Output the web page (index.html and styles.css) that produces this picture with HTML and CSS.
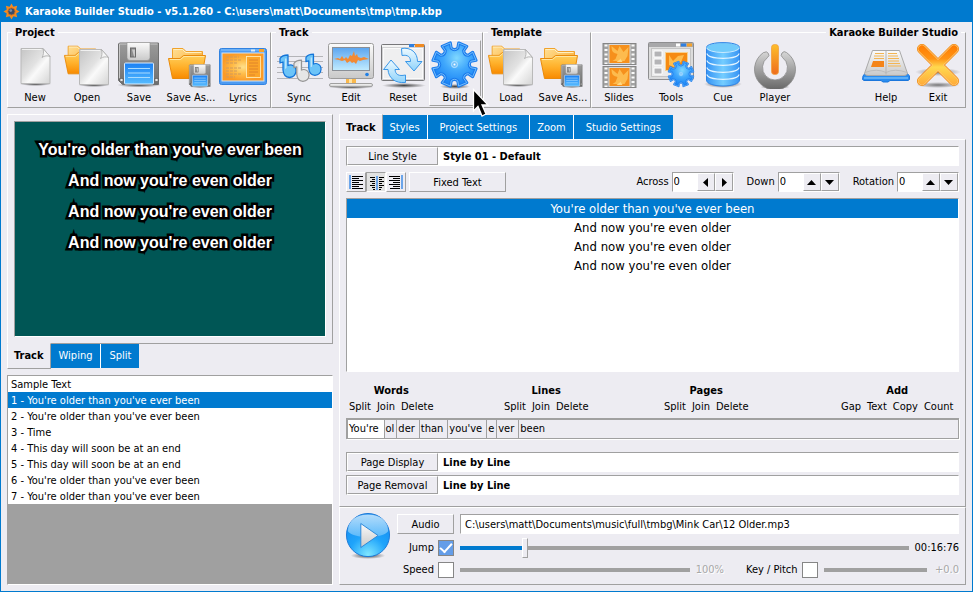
FILE: index.html
```html
<!DOCTYPE html>
<html lang="en">
<head>
<meta charset="utf-8">
<title>Karaoke Builder Studio</title>
<link rel="stylesheet" href="styles.css">
</head>
<body>
<svg class="defs" aria-hidden="true">
  <defs>
    <linearGradient id="paper" x1="0" y1="0" x2="1" y2="1"><stop offset="0" stop-color="#c4c4c4"/><stop offset=".45" stop-color="#e2e2e2"/><stop offset=".6" stop-color="#fafafa"/><stop offset="1" stop-color="#d4d4d4"/></linearGradient>
    <linearGradient id="folder" x1="0" y1="0" x2="0" y2="1"><stop offset="0" stop-color="#ffcf5c"/><stop offset=".5" stop-color="#ffb02a"/><stop offset="1" stop-color="#f88a00"/></linearGradient>
    <linearGradient id="folderback" x1="0" y1="0" x2="1" y2="1"><stop offset="0" stop-color="#ffdf94"/><stop offset="1" stop-color="#f9a01c"/></linearGradient>
    <linearGradient id="steel" x1="0" y1="0" x2="0" y2="1"><stop offset="0" stop-color="#9b9b9b"/><stop offset="1" stop-color="#6e6e6e"/></linearGradient>
    <linearGradient id="silver" x1="0" y1="0" x2="0" y2="1"><stop offset="0" stop-color="#fbfbfb"/><stop offset="1" stop-color="#c9c9c9"/></linearGradient>
    <linearGradient id="blue" x1="0" y1="0" x2="0" y2="1"><stop offset="0" stop-color="#1a80f4"/><stop offset="1" stop-color="#57bcff"/></linearGradient>
    <linearGradient id="sky" x1="0" y1="0" x2="0" y2="1"><stop offset="0" stop-color="#5ba5f0"/><stop offset="1" stop-color="#c2ecff"/></linearGradient>
    <linearGradient id="ice" x1="0" y1="0" x2="0" y2="1"><stop offset="0" stop-color="#eefaff"/><stop offset="1" stop-color="#8fd3fb"/></linearGradient>
    <radialGradient id="amber"><stop offset="0" stop-color="#ffe08a"/><stop offset=".5" stop-color="#ffbc48"/><stop offset="1" stop-color="#fb9a26"/></radialGradient>
    <radialGradient id="gearfill" cx=".55" cy=".35" r=".6"><stop offset="0" stop-color="#80d8ff"/><stop offset=".5" stop-color="#41a8fc"/><stop offset="1" stop-color="#1c86f6"/></radialGradient>
    <linearGradient id="cyl" x1="0" y1="0" x2="1" y2="0"><stop offset="0" stop-color="#3794f5"/><stop offset=".5" stop-color="#74cdff"/><stop offset="1" stop-color="#3794f5"/></linearGradient>
    <linearGradient id="ring" x1="0" y1="0" x2="0" y2="1"><stop offset="0" stop-color="#d6d6d6"/><stop offset="1" stop-color="#666"/></linearGradient>
    <linearGradient id="bar" x1="0" y1="0" x2="0" y2="1"><stop offset="0" stop-color="#fdbf2c"/><stop offset="1" stop-color="#ee6c1c"/></linearGradient>
    <linearGradient id="cross" gradientUnits="userSpaceOnUse" x1="24" y1="3" x2="24" y2="45"><stop offset="0" stop-color="#ff7a00"/><stop offset=".35" stop-color="#ff9416"/><stop offset=".55" stop-color="#ffd84e"/><stop offset="1" stop-color="#ffa838"/></linearGradient>
    <radialGradient id="ball" cx=".5" cy=".95" r=".95"><stop offset="0" stop-color="#7fe6ff"/><stop offset=".45" stop-color="#1fa4fb"/><stop offset="1" stop-color="#1487ee"/></radialGradient>
    <linearGradient id="gloss" x1="0" y1="0" x2="0" y2="1"><stop offset="0" stop-color="#e9f8ff"/><stop offset="1" stop-color="#6fc2fb"/></linearGradient>
    <radialGradient id="shade"><stop offset="0" stop-color="#444"/><stop offset="1" stop-color="#444" stop-opacity="0"/></radialGradient>
  </defs>
  <symbol id="i-page" viewBox="0 0 32 39">
    <ellipse cx="16" cy="37" rx="16" ry="2" fill="url(#shade)"/>
    <path d="M1.500 1.500H23.500L30.500 9.500V36.500H1.500z" fill="url(#paper)" stroke="#b9b9b9"/>
    <path d="M2.500 2.500H22" stroke="#fff" fill="none" opacity=".7"/>
    <path d="M23.500 1.500C24.500 5 24 8 22.500 10.500C25 8.500 28 8.500 30.500 9.500z" fill="#f6f6f6" stroke="#a8a8a8" stroke-width=".8"/>
  </symbol>
  <symbol id="i-folder" viewBox="0 0 38 33">
    <path d="M4.500 28V1.500H15L18 4.500H34.500V28z" fill="url(#folderback)" stroke="#f0a22c"/>
    <path d="M5.500 2.500H14.500L17.500 5.500H33.500" fill="none" stroke="#ffefbf"/>
    <path d="M.500 11.500H12L15.500 8.500H37.500L33.500 31.500H4.500z" fill="url(#folder)" stroke="#e98a0c"/>
    <path d="M1.800 12.500H12.500L16 9.500H36.400" fill="none" stroke="#ffe6a0"/>
  </symbol>
  <symbol id="i-floppy" viewBox="0 0 44 46">
    <ellipse cx="22" cy="43.500" rx="22" ry="2.500" fill="url(#shade)"/>
    <path d="M2.500 1.500H41.500V43H5.500L1.500 39V2.500z" fill="url(#steel)" stroke="#707070"/>
    <path d="M2.500 37V2.500H40.500" fill="none" stroke="#c9c9c9"/>
    <path d="M10 1H33V16Q33 19 30 19H13Q10 19 10 16z" fill="url(#silver)" stroke="#8d8d8d" stroke-width=".6"/>
    <rect x="13.500" y="6.500" width="5" height="9" fill="#8b8b8b" stroke="#6a6a6a"/>
    <path d="M15 8h3v7h-1z" fill="#c9c9c9"/>
    <rect x="7.500" y="21.500" width="29" height="21" rx="1" fill="url(#blue)" stroke="#d9ecff"/>
    <path d="M11 27H33M11 31.500H33M11 36H33" stroke="#a9dbff" stroke-width="1.200"/>
    <rect x="3" y="37" width="3" height="3" fill="#e8e8e8" stroke="#555" stroke-width=".6"/><rect x="38" y="37" width="3" height="3" fill="#e8e8e8" stroke="#555" stroke-width=".6"/>
  </symbol>
  <symbol id="i-gear" viewBox="-24 -24 48 48">
    <g stroke-linejoin="round">
      <path d="M16-3.200Q13 0 16 3.200L21.100 4.100L17.800 12L13.600 9Q9.200 9.200 9 13.600L12 17.800L4.100 21.100L3.200 16Q0 13-3.200 16L-4.100 21.100L-12 17.800L-9 13.600Q-9.200 9.200-13.600 9L-17.800 12L-21.100 4.100L-16 3.200Q-13 0-16-3.200L-21.100-4.100L-17.800-12L-13.600-9Q-9.200-9.200-9-13.600L-12-17.800L-4.100-21.100L-3.200-16Q0-13 3.200-16L4.100-21.100L12-17.800L9-13.600Q9.200-9.200 13.600-9L17.800-12L21.100-4.100z" fill="url(#gearfill)" stroke="#1b7bec" stroke-width="3"/>
      <path d="M16-3.200Q13 0 16 3.200L21.100 4.100L17.800 12L13.600 9Q9.200 9.200 9 13.600L12 17.800L4.100 21.100L3.200 16Q0 13-3.200 16L-4.100 21.100L-12 17.800L-9 13.600Q-9.200 9.200-13.600 9L-17.800 12L-21.100 4.100L-16 3.200Q-13 0-16-3.200L-21.100-4.100L-17.800-12L-13.600-9Q-9.200-9.200-9-13.600L-12-17.800L-4.100-21.100L-3.200-16Q0-13 3.200-16L4.100-21.100L12-17.800L9-13.600Q9.200-9.200 13.600-9L17.800-12L21.100-4.100z" fill="none" stroke="#86ccff" stroke-width=".8"/>
    </g>
    <circle r="3" fill="#6fc0fb" stroke="#c7e8ff" stroke-width=".8"/><circle r="1" fill="#fff"/>
  </symbol>
  <symbol id="i-note" viewBox="0 0 18 25">
    <path d="M4 16V8L1 9V4.500Q3 1 9 1V11.500Q11 10.500 13 11.200Q17 12.500 17 17Q16.500 23 10.500 23.500Q4.500 23 4 16z" stroke-width="1.300" stroke-linejoin="round"/>
    <path d="M6 15V4.500H7.500V14" fill="#fff" fill-opacity=".55" stroke="none"/>
  </symbol>
  <symbol id="i-open" viewBox="0 0 48 48"><use href="#i-folder" x="1" y="3" width="35" height="32"/><use href="#i-page" x="15" y="7" width="32" height="39"/></symbol>
  <symbol id="i-saveas" viewBox="0 0 48 48"><use href="#i-folder" x="1" y="6" width="38" height="33"/><use href="#i-floppy" x="21" y="23" width="24" height="24"/></symbol>
  <symbol id="i-frame" viewBox="0 0 34 22">
    <rect x=".500" y=".500" width="33" height="21" fill="#a2a2a2" stroke="#858585"/>
    <path d="M3.500 1.500V21M30.500 1.500V21" stroke="#fafafa" stroke-width="3" stroke-dasharray="2 2.500"/>
    <rect x="6.500" y="1.500" width="21" height="19" fill="#f6901c" stroke="#d8d8d8"/>
    <path d="M9 3C9 9 11 10 15 11L13 16L10 18H22L25 13L26 4L21 9L17 3L15 8z" fill="#fdbb4e"/>
    <path d="M15 11L18 16L14 19H20z" fill="#ffd884"/>
  </symbol>
</svg>

<div class="window">
  <header class="titlebar">
    <svg class="logo" viewBox="-9 -9 18 18" aria-hidden="true">
      <path d="M0-8.500L2-5L6-6L5-2L8.500 0L5 2L6 6L2 5L0 8.500L-2 5L-6 6L-5 2L-8.500 0L-5-2L-6-6L-2-5z" fill="#f58a1f"/>
      <circle r="3.800" fill="#3b4c66" stroke="#c6702a"/><circle cx="-.8" cy="-1" r="1.500" fill="#7d8da4"/>
    </svg>
    <h1>Karaoke Builder Studio - v5.1.260 - C:\users\matt\Documents\tmp\tmp.kbp</h1>
  </header>

  <nav class="toolbar" aria-label="Main toolbar">
    <fieldset class="group">
      <legend>Project</legend>
      <button class="tool" type="button"><svg viewBox="0 0 48 48"><use href="#i-page" x="8" y="6" width="33" height="39"/></svg>New</button>
      <button class="tool" type="button"><svg viewBox="0 0 48 48"><use href="#i-open"/></svg>Open</button>
      <button class="tool" type="button"><svg viewBox="0 0 48 48"><use href="#i-floppy" x="2" y="0" width="44" height="47"/></svg>Save</button>
      <button class="tool" type="button"><svg viewBox="0 0 48 48"><use href="#i-saveas"/></svg>Save As...</button>
      <button class="tool" type="button"><svg viewBox="0 0 48 48">
        <rect x=".500" y="7.500" width="47" height="36" rx="2" fill="#4d9bf2" stroke="#3182e0"/>
        <path d="M2 9H46" stroke="#8ec6fb"/><path d="M32 8.500h4v2h-4z" fill="#dcebf8"/><path d="M40 8h5v3h-5z" fill="#f8a32c"/>
        <rect x="3" y="12" width="42" height="28" fill="url(#amber)" stroke="#cfe3f5"/>
        <rect x="27.500" y="15.500" width="14" height="21" fill="#fba52a" stroke="#fff0c0" stroke-width=".8"/>
        <path d="M30 19H39M30 22H39M30 25H39M30 28H39M30 31H39M30 34H36" stroke="#e0842a"/>
        <path d="M7 16H20M7 19H22M7 22H18M7 27H22M7 30H19M7 33H23M7 36H16" stroke="#cf9a5c" stroke-dasharray="3 1"/>
      </svg>Lyrics</button>
    </fieldset>
    <fieldset class="group">
      <legend>Track</legend>
      <button class="tool" type="button"><svg viewBox="0 0 48 48">
        <path d="M2 15.500H48M2 20.500H48M2 26.500H48M2 31.500H48M2 37.500H48" stroke="#b4b4b8"/>
        <use href="#i-note" x="4" y="13" width="18" height="25" fill="#6cc4f8" stroke="#1474d8"/>
        <use href="#i-note" x="18" y="18" width="17" height="24" fill="#e6e6e6" stroke="#959595"/>
        <use href="#i-note" x="30" y="12" width="17" height="24" fill="#6cc4f8" stroke="#1474d8"/>
      </svg>Sync</button>
      <button class="tool" type="button"><svg viewBox="0 0 48 48">
        <ellipse cx="24" cy="46" rx="23" ry="2" fill="url(#shade)"/>
        <path d="M19 37H29V43H19z" fill="#f9b84c"/><path d="M22 37h3v6h-3z" fill="#ffe3a6"/>
        <rect x="2.500" y="42.500" width="43" height="3" rx="1.500" fill="url(#silver)" stroke="#a0a0a0"/>
        <rect x="1.500" y="2.500" width="45" height="35" rx="2" fill="url(#silver)" stroke="#9c9c9c"/>
        <rect x="5.500" y="6.500" width="37" height="23" fill="url(#sky)" stroke="#8a8f96"/>
        <path d="M7 18L11 17L13 18L15 15L17 18L19 16L21 18L23 14L25 15L27 10L28 15L30 13L31 16L34 17L37 16L42 18L36 19L33 20L31 19L29 23L27 21L25 22L23 20L20 22L18 19L15 20L12 19z" fill="#f28a35"/>
        <circle cx="40" cy="33.500" r="1.800" fill="#1f7fe6"/>
      </svg>Edit</button>
      <button class="tool" type="button"><svg viewBox="0 0 48 48">
        <ellipse cx="25" cy="44.500" rx="22" ry="2.500" fill="url(#shade)"/>
        <rect x="2.500" y="3.500" width="43" height="36" rx="1" fill="#d2d2d4" stroke="#77777a"/>
        <path d="M3 5H31" stroke="#f4f4f4" stroke-width="2"/><path d="M30 3h5v3h-5z" fill="#2f7fe0"/><path d="M36 3h9v3h-9z" fill="#ef8a22"/>
        <rect x="4.500" y="7.500" width="39" height="30" fill="#efeff0" stroke="#fafafa"/>
        <path d="M22.500 7.500C32 6 38.500 11.500 38.500 20.500H43L35 30L26.500 20.500H31.500C31.500 16 29 13.500 23 14.500z" fill="url(#ice)" stroke="#3a97e8" stroke-linejoin="round"/>
        <path d="M26.500 41.500C16 42.500 9.500 37 9 28.500H4.500L12 19L20.500 28.500H16C16.500 33.500 19.500 35.500 26.500 34z" fill="url(#ice)" stroke="#3a97e8" stroke-linejoin="round"/>
      </svg>Reset</button>
      <button class="tool is-hover" type="button"><svg viewBox="0 0 48 48"><ellipse cx="24" cy="45.500" rx="15" ry="2.500" fill="url(#shade)"/><use href="#i-gear" x="-1" y="-1" width="49" height="49"/></svg>Build</button>
    </fieldset>
    <fieldset class="group">
      <legend>Template</legend>
      <button class="tool" type="button"><svg viewBox="0 0 48 48"><use href="#i-open"/></svg>Load</button>
      <button class="tool" type="button"><svg viewBox="0 0 48 48"><use href="#i-saveas"/></svg>Save As...</button>
    </fieldset>
    <fieldset class="group g-studio">
      <legend>Karaoke Builder Studio</legend>
      <button class="tool" type="button"><svg viewBox="0 0 48 48"><use href="#i-frame" x="7" y="2" width="35" height="22"/><use href="#i-frame" x="7" y="25" width="35" height="22"/></svg>Slides</button>
      <button class="tool" type="button"><svg viewBox="0 0 48 48">
        <rect x="1.500" y="1.500" width="45" height="37" rx="1" fill="#dcdcdc" stroke="#8e8e90"/>
        <path d="M2 4H46" stroke="#a8a8aa" stroke-width="4"/><path d="M29 2.500h4v3h-4z" fill="#fff"/><path d="M34 2.500h5v3h-5z" fill="#2f7fe0"/><path d="M40 2.500h5v3h-5z" fill="#f6a22a"/>
        <rect x="4.500" y="7.500" width="39" height="28" fill="#ececec" stroke="#c4c4c4"/>
        <path d="M7 10h8v6H7zM7 18h8v6H7zM7 27h8v6H7z" fill="#b4b4b6" stroke="#fff"/>
        <rect x="18.500" y="11.500" width="22" height="18" fill="#f68b12" stroke="#f6d08e"/><path d="M22 14L26 20L31 15L37 14L34 21L27 26L22 24z" fill="#fdbd50"/>
        <use href="#i-gear" x="20" y="19" width="28" height="28"/>
      </svg>Tools</button>
      <button class="tool" type="button"><svg viewBox="0 0 48 48">
        <ellipse cx="24" cy="43" rx="19" ry="4" fill="url(#shade)"/>
        <path d="M7.500 6V39C7.500 47 40.500 47 40.500 39V6z" fill="url(#cyl)" stroke="#2f83e4"/>
        <path d="M8 12.500C9 19 39 19 40 12.500M8 19.500C9 26 39 26 40 19.500M8 26.500C9 33 39 33 40 26.500M8 33.500C9 40 39 40 40 33.500" fill="none" stroke="#e2f4ff" stroke-width="1.300"/>
        <ellipse cx="24" cy="6.500" rx="16.500" ry="5" fill="#71cbfb" stroke="#c9eaff"/><path d="M7.500 6.500C8 0 40 0 40.500 6.500" fill="none" stroke="#2f83e4"/>
      </svg>Cue</button>
      <button class="tool" type="button"><svg viewBox="0 0 48 48">
        <ellipse cx="24" cy="46" rx="15" ry="2" fill="url(#shade)"/>
        <path d="M13 11.500A3 3 0 0 1 16.500 16.500A12.500 12.500 0 1 0 31.500 16.500A3 3 0 0 1 35.500 11.500A20.500 20.500 0 1 1 12.500 11.500z" fill="url(#ring)" stroke="#8a8a8a" stroke-width=".8"/>
        <rect x="20.500" y="3.500" width="7" height="30" rx="3" fill="url(#bar)" stroke="#f2a03c" stroke-width=".8"/>
      </svg>Player</button>
      <button class="tool push" type="button"><svg viewBox="0 0 48 48">
        <path d="M1 35L4 31H44L47.500 35V38.500L46 39.500H28L26 41H21L19 39.500H2L.500 38.500z" fill="#2a8df0" stroke="#1b76dc"/>
        <path d="M2 37H46" stroke="#8fd0ff"/>
        <path d="M10.500 9.500H37.500L45.500 32.500Q45 34.500 42 34.500H6Q3 34.500 2.500 32.500z" fill="url(#silver)" stroke="#a9a9a9"/>
        <path d="M3 31.500Q15 27 24 31.500Q33 27 45 31.500" fill="none" stroke="#bdbdbd"/>
        <path d="M24 10V33.500" stroke="#b5b5b5"/>
        <path d="M13 12.500H22M12 15H22M12 17.500H22M26 12.500H35M26 15H36M26 17.500H37M26 20H37M26 22.500H38M26 25H39" stroke="#f3b552" stroke-width="1.200"/>
        <path d="M11 20H22V26H9z" fill="#f48418"/>
      </svg>Help</button>
      <button class="tool" type="button"><svg viewBox="0 0 48 48">
        <ellipse cx="24" cy="31" rx="23" ry="4" fill="url(#shade)" opacity=".7"/><ellipse cx="24" cy="44" rx="22" ry="3" fill="url(#shade)" opacity=".7"/>
        <path d="M8 8L40 40M40 8L8 40" stroke="#f08a10" stroke-width="10" stroke-linecap="round"/>
        <path d="M8 8L40 40.010M40 8L8 40.010" stroke="#ffc878" stroke-width="8.500" stroke-linecap="round"/>
        <path d="M8 8L40 40.010M40 8L8 40.010" stroke="url(#cross)" stroke-width="7" stroke-linecap="round"/>
      </svg>Exit</button>
    </fieldset>
  </nav>

  <main class="workspace">
    <section class="left" aria-label="Preview and track">
      <div class="preview-panel">
        <div class="preview">
          <p>You're older than you've ever been</p>
          <p>And now you're even older</p>
          <p>And now you're even older</p>
          <p>And now you're even older</p>
        </div>
      </div>
      <div class="tabs" role="tablist" aria-label="Track views">
        <button class="tab is-active" role="tab" aria-selected="true" type="button">Track</button>
        <button class="tab" role="tab" type="button">Wiping</button>
        <button class="tab" role="tab" type="button">Split</button>
      </div>
      <ul class="pages" role="listbox" aria-label="Pages">
        <li role="option">Sample Text</li>
        <li role="option" aria-selected="true">1 - You're older than you've ever been</li>
        <li role="option">2 - You're older than you've ever been</li>
        <li role="option">3 - Time</li>
        <li role="option">4 - This day will soon be at an end</li>
        <li role="option">5 - This day will soon be at an end</li>
        <li role="option">6 - You're older than you've ever been</li>
        <li role="option">7 - You're older than you've ever been</li>
      </ul>
    </section>

    <section class="right" aria-label="Track editor">
      <div class="tabs" role="tablist" aria-label="Editor views">
        <button class="tab is-active" role="tab" aria-selected="true" type="button">Track</button>
        <button class="tab" role="tab" type="button">Styles</button>
        <button class="tab wide" role="tab" type="button">Project Settings</button>
        <button class="tab" role="tab" type="button">Zoom</button>
        <button class="tab wide" role="tab" type="button">Studio Settings</button>
      </div>
      <div class="editor">
        <div class="field">
          <button class="btn" type="button" id="line-style">Line Style</button>
          <input type="text" value="Style 01 - Default" aria-labelledby="line-style">
        </div>

        <div class="options">
          <div class="aligns">
            <button class="align" type="button" aria-label="Align left"><svg viewBox="0 0 18 18"><path d="M2 2h2v14H2z" fill="#6ba5ea"/><path d="M5 3.500h11M5 5.500h7M5 7.500h11M5 9.500h7M5 11.500h11M5 13.500h7M5 15.500h11" stroke="#000"/></svg></button>
            <button class="align is-pressed" type="button" aria-label="Align centre" aria-pressed="true"><svg viewBox="0 0 18 18"><path d="M9 3h2v14H9z" fill="#6ba5ea"/><path d="M3 4.500h5M12 4.500h5M5 6.500h3M12 6.500h3M3 8.500h5M12 8.500h5M5 10.500h3M12 10.500h3M3 12.500h5M12 12.500h5M5 14.500h3M12 14.500h3M6 16.500h2M12 16.500h2" stroke="#000"/></svg></button>
            <button class="align" type="button" aria-label="Align right"><svg viewBox="0 0 18 18"><path d="M14 2h2v14h-2z" fill="#6ba5ea"/><path d="M2 3.500h11M6 5.500h7M2 7.500h11M6 9.500h7M2 11.500h11M6 13.500h7M3 15.500h10" stroke="#000"/></svg></button>
          </div>
          <button class="btn fixed" type="button">Fixed Text</button>
          <div class="spinners">
            <label for="across">Across</label>
            <div class="spinner"><input id="across" type="text" value="0"><button type="button" aria-label="Left"><svg viewBox="0 0 16 16"><path d="M10 4v9L5 8.500z"/></svg></button><button type="button" aria-label="Right"><svg viewBox="0 0 16 16"><path d="M6 4v9l5-4.500z"/></svg></button></div>
            <label for="down">Down</label>
            <div class="spinner"><input id="down" type="text" value="0"><button type="button" aria-label="Up"><svg viewBox="0 0 16 16"><path d="M3 11h9L7.500 6z"/></svg></button><button type="button" aria-label="Down"><svg viewBox="0 0 16 16"><path d="M3 6h9l-4.500 5z"/></svg></button></div>
            <label for="rotation">Rotation</label>
            <div class="spinner"><input id="rotation" type="text" value="0"><button type="button" aria-label="Increase"><svg viewBox="0 0 16 16"><path d="M3 11h9L7.500 6z"/></svg></button><button type="button" aria-label="Decrease"><svg viewBox="0 0 16 16"><path d="M3 6h9l-4.500 5z"/></svg></button></div>
          </div>
        </div>

        <ul class="lines" role="listbox" aria-label="Lines">
          <li role="option" aria-selected="true">You're older than you've ever been</li>
          <li role="option">And now you're even older</li>
          <li role="option">And now you're even older</li>
          <li role="option">And now you're even older</li>
        </ul>

        <div class="commands">
          <div class="command"><h2>Words</h2><div class="links"><button type="button">Split</button><button type="button">Join</button><button type="button">Delete</button></div></div>
          <div class="command"><h2>Lines</h2><div class="links"><button type="button">Split</button><button type="button">Join</button><button type="button">Delete</button></div></div>
          <div class="command"><h2>Pages</h2><div class="links"><button type="button">Split</button><button type="button">Join</button><button type="button">Delete</button></div></div>
          <div class="command"><h2>Add</h2><div class="links"><button type="button">Gap</button><button type="button">Text</button><button type="button">Copy</button><button type="button">Count</button></div></div>
        </div>

        <div class="syllables">
          <button class="word-end is-current" type="button">You're</button>
          <button type="button">ol</button>
          <button class="word-end" type="button">der</button>
          <button class="word-end" type="button">than</button>
          <button class="word-end" type="button">you've</button>
          <button type="button">e</button>
          <button class="word-end" type="button">ver</button>
          <button type="button">been</button>
        </div>

        <div class="timing">
          <div class="field">
            <button class="btn" type="button" id="page-display">Page Display</button>
            <input type="text" value="Line by Line" aria-labelledby="page-display">
          </div>
          <div class="field">
            <button class="btn" type="button" id="page-removal">Page Removal</button>
            <input type="text" value="Line by Line" aria-labelledby="page-removal">
          </div>
        </div>
      </div>

      <div class="player">
        <button class="play" type="button" aria-label="Play"><svg viewBox="0 0 48 50">
          <ellipse cx="24" cy="45.500" rx="18" ry="3.500" fill="url(#shade)"/>
          <circle cx="24" cy="24" r="22.500" fill="url(#ball)" stroke="#1b78d6"/>
          <path d="M3 20C3 8 13 2.500 24 2.500S45 8 45 20C40 28 8 28 3 20z" fill="url(#gloss)" opacity=".75"/>
          <path d="M16.500 12L34.500 24.500L16.500 37z" fill="url(#silver)" stroke="#2a86d8" stroke-linejoin="round"/>
        </svg></button>
        <div class="audio-row row">
          <button class="btn" type="button" id="audio">Audio</button>
          <input class="path" type="text" value="C:\users\matt\Documents\music\full\tmbg\Mink Car\12 Older.mp3" aria-labelledby="audio">
        </div>
        <div class="jump-row row">
          <div class="toggle"><label for="jump">Jump</label><input id="jump" type="checkbox" checked></div>
          <input class="slider jump" type="range" min="0" max="448" value="63" aria-label="Position">
          <output>00:16:76</output>
        </div>
        <div class="row">
          <div class="toggle"><label for="speed">Speed</label><input id="speed" type="checkbox"></div>
          <input class="slider speed" type="range" disabled aria-label="Speed value">
          <output class="dim">100%</output>
          <div class="toggle key"><label for="key">Key / Pitch</label><input id="key" type="checkbox"></div>
          <input class="slider pitch" type="range" disabled aria-label="Pitch value">
          <output class="dim pitch-value">+0.0</output>
        </div>
      </div>
    </section>
  </main>

  <svg class="cursor" viewBox="0 0 18 30" aria-hidden="true"><path d="M1.500 1.500V23L6 18.500L10 28L14 26L10 17H16z" fill="#000" stroke="#fff" stroke-width="1.300"/></svg>
</div>
</body>
</html>
```
FILE: styles.css
```css
:root {
  --face: #edecf2;
  --blue: #007acf;
  --grey: #a0a0a0;
  --raised: #fff var(--grey) var(--grey) #fff;
  --sunken: var(--grey) #fff #fff var(--grey);
}

* { box-sizing: border-box; }

body {
  margin: 0;
  background: var(--face);
  color: #000;
  font: 11px/16px "DejaVu Sans Condensed", Tahoma, sans-serif;
}

button, input, output { font: inherit; color: inherit; }

button {
  margin: 0;
  padding: 0;
  border: 0;
  background: none;
  white-space: nowrap;
}

input { margin: 0; min-width: 0; border-radius: 0; }
input[type="text"] { padding: 0; border: 0; background: #fff; }

h1, h2, p, ul { margin: 0; padding: 0; font-size: 11px; }
ul { list-style: none; }
svg { display: block; }
.defs { position: absolute; width: 0; height: 0; }

.window {
  position: relative;
  display: flex;
  flex-direction: column;
  min-height: 100vh;
  border: 1px solid var(--blue);
  border-top: 0;
}

.titlebar {
  display: flex;
  align-items: center;
  gap: 5px;
  height: 22px;
  padding-left: 2px;
  background: var(--blue);
  color: #fff;
}
.titlebar h1 { padding-top: 1px; }
.logo { width: 17px; height: 17px; }

/* Toolbar */
.toolbar {
  display: flex;
  padding: 3px 6px 0;
}
.group {
  display: flex;
  min-width: 0;
  margin: 0;
  padding: 1px;
  border: 1px solid;
  border-color: var(--raised);
}
.group legend {
  margin-left: 3px;
  padding: 2px 3px 0;
  font-weight: bold;
  line-height: 12px;
}
.g-studio { flex: 1; }
.g-studio legend { margin-left: auto; margin-right: 3px; }
.push { margin-left: auto; }

.tool {
  display: flex;
  flex-direction: column;
  align-items: center;
  justify-content: flex-start;
  width: 52px;
  height: 66px;
  border: 1px solid transparent;
  line-height: 14px;
}
.tool svg { width: 48px; height: 48px; margin-bottom: 2px; }
.tool.is-hover { border-color: var(--raised); }

/* Two columns below the toolbar */
.workspace {
  flex: 1;
  display: grid;
  grid-template-columns: 326fr 627fr;
  gap: 6px;
  padding: 6px;
}
.left, .right { display: flex; flex-direction: column; min-width: 0; }

.preview-panel {
  padding: 6px;
  border: 1px solid;
  border-color: var(--raised);
}
.preview {
  aspect-ratio: 13 / 9;
  padding-top: 12px;
  border: 1px solid;
  border-color: var(--sunken);
  background: #005655;
  color: #fff;
  text-align: center;
  font-family: "Liberation Sans", Arial, sans-serif;
  font-weight: bold;
}
.preview p {
  font-size: 16px;
  line-height: 31px;
  -webkit-text-stroke: 5px #000;
  paint-order: stroke fill;
}

/* Tabs */
.tabs { display: flex; }
.tab {
  height: 24px;
  padding: 2px 7px 0;
  border-right: 1px solid #fff;
  background: var(--blue);
  color: #fff;
}
.tab:last-child { border-right: 0; }
.tab.wide { padding: 2px 12px 0; }
.tab.is-active {
  height: 26px;
  padding: 2px 6px 0;
  border: 1px solid;
  background: var(--face);
  color: #000;
  font-weight: bold;
}
.left .tab { padding: 0 8px; }
.left .tab.is-active {
  margin-top: -1px;
  padding: 0 6px;
  border-color: transparent var(--grey) var(--grey) #fff;
}
.right .tabs { align-items: flex-end; }
.right .tab.is-active {
  margin-bottom: -1px;
  border-color: #fff var(--grey) transparent #fff;
}

.pages {
  flex: 1;
  margin-top: 6px;
  border: 1px solid;
  border-color: var(--sunken);
  background: var(--grey);
}
.pages li { padding: 2px 0 0 3px; line-height: 14px; background: #fff; }
.pages li[aria-selected="true"], .lines li[aria-selected="true"] { background: var(--blue); color: #fff; }

/* Editor */
.editor {
  flex: 1;
  display: flex;
  flex-direction: column;
  gap: 6px;
  padding: 6px 6px 11px;
  border: 1px solid;
  border-color: var(--raised);
}

.btn {
  padding-top: 1px;
  border: 1px solid;
  border-color: var(--raised);
  background: var(--face);
  text-align: center;
}
.field {
  display: flex;
  height: 20px;
  border: 1px solid;
  border-color: var(--sunken);
  background: #fff;
}
.field .btn { width: 91px; }
.field input { flex: 1; padding: 1px 0 0 5px; font-weight: bold; }

.options { display: flex; height: 20px; }
.aligns { display: flex; }
.align {
  width: 20px;
  height: 20px;
  border: 1px solid;
  border-color: var(--raised);
}
.align svg { width: 18px; height: 18px; }
.align.is-pressed { border-color: var(--sunken); background: #e2e2e2; }
.fixed { width: 97px; margin-left: 3px; }

.spinners { display: flex; align-items: center; margin-left: auto; }
.spinners label { margin: 0 3px 0 13px; }
.spinner {
  display: flex;
  width: 62px;
  height: 20px;
  border: 1px solid;
  border-color: var(--sunken);
}
.spinner input { flex: 1; width: 0; padding-left: 1px; }
.spinner button {
  width: 18px;
  border: 1px solid;
  border-color: var(--raised);
  background: var(--face);
}
.spinner svg { width: 16px; height: 16px; }

.lines {
  flex: 1;
  border: 1px solid;
  border-color: var(--sunken);
  background: #fff;
  text-align: center;
}
.lines li { font-size: 13px; line-height: 19px; }

.commands {
  display: grid;
  grid-template-columns: 155fr 160fr 177fr 121fr;
  justify-items: start;
  margin-top: 4px;
}
.command { padding: 0 3px; text-align: center; }
.command h2 { line-height: 17px; }
.links { display: flex; gap: 6px; }

.syllables {
  display: flex;
  height: 21px;
  margin-top: -3px;
  border: 1px solid var(--grey);
  border-width: 2px 1px 1px 2px;
  box-shadow: 1px 1px #fff;
}
.syllables button { padding: 0 2px 0 1px; border-right: 1px solid var(--grey); }
.syllables .word-end { padding-right: 4px; }
.syllables button:last-child { border-right: 0; }
.syllables .is-current { padding-right: 5px; background: #fff; }

.timing { display: grid; gap: 3px; margin-top: 7px; }

/* Player */
.player {
  display: grid;
  grid-template-columns: 46px 1fr;
  gap: 4px 6px;
  padding: 6px 6px 6px 5px;
  border: 1px solid;
  border-color: var(--raised);
}
.play { grid-row: 1 / 4; align-self: start; margin: -3px 0; }
.play svg { width: 46px; height: 50px; }

.row { display: flex; align-items: center; gap: 6px; }
.audio-row { height: 20px; }
.audio-row .btn { width: 57px; height: 20px; }
.audio-row .path {
  flex: 1;
  height: 20px;
  padding-left: 4px;
  border: 1px solid;
  border-color: var(--sunken);
}
.jump-row { height: 20px; }

.toggle {
  display: flex;
  justify-content: flex-end;
  align-items: center;
  gap: 4px;
  width: 57px;
}
.toggle.key { width: auto; margin-left: 16px; }

input[type="checkbox"] {
  appearance: none;
  width: 16px;
  height: 16px;
  border: 1px solid #868686;
  background: #fff;
}
input[type="checkbox"]:checked { display: grid; place-items: center; background: #649de8; }
input[type="checkbox"]:checked::before {
  content: "";
  width: 10px;
  height: 5px;
  margin-bottom: 3px;
  border: solid #fff;
  border-width: 0 0 2px 2px;
  rotate: -48deg;
}

.slider { appearance: none; height: 16px; background: none; opacity: 1; }
.slider.jump { height: 20px; }
.slider::-webkit-slider-runnable-track { height: 4px; background: var(--grey); }
.slider::-webkit-slider-thumb { appearance: none; width: 0; height: 4px; }
.slider.jump { flex: 1; }
.slider.jump::-webkit-slider-runnable-track {
  background: linear-gradient(90deg, var(--blue) 14%, var(--grey) 14%);
}
.slider.jump::-webkit-slider-thumb {
  width: 6px;
  height: 20px;
  margin-top: -8px;
  border: 1px solid;
  border-color: var(--raised);
  background: var(--face);
}
.slider.speed { flex: 231 0 0; }
.slider.pitch { flex: 104 0 0; }
.dim { color: #a8a8a8; text-shadow: 1px 1px #fff; }
.pitch-value { margin-left: 2px; }

.cursor {
  position: absolute;
  left: 471px;
  top: 88px;
  width: 18px;
  height: 30px;
}
```
